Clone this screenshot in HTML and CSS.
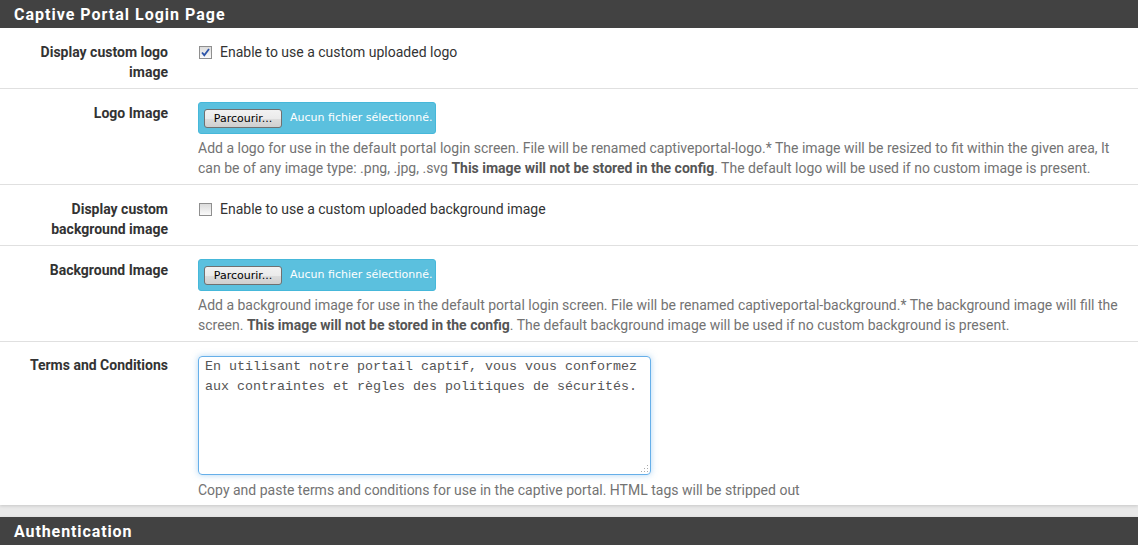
FILE: index.html
```html
<!DOCTYPE html>
<html lang="fr">
<head>
<meta charset="utf-8">
<title>Captive Portal Login Page</title>
<link rel="stylesheet" href="styles.css">
</head>
<body>
<div class="panel">
  <div class="panel-heading"><h2 class="panel-title">Captive Portal Login Page</h2></div>
  <div class="panel-body">
    <div class="form-group">
      <div class="label-col">Display custom logo image</div>
      <div class="field-col">
        <label class="chk">
          <span class="box checked"><svg viewBox="0 0 13 13" width="13" height="13"><path d="M3 6.5 L5.3 9.2 L10 3" fill="none" stroke="#2d54a8" stroke-width="1.8"/></svg></span>
          Enable to use a custom uploaded logo
        </label>
      </div>
    </div>
    <div class="form-group">
      <div class="label-col">Logo Image</div>
      <div class="field-col">
        <div class="file-input"><span class="browse">Parcourir...</span><span class="file-name">Aucun fichier sélectionné.</span></div>
        <p class="help">Add a logo for use in the default portal login screen. File will be renamed captiveportal-logo.* The image will be resized to fit within the given area, It can be of any image type: .png, .jpg, .svg <b>This image will not be stored in the config</b>. The default logo will be used if no custom image is present.</p>
      </div>
    </div>
    <div class="form-group">
      <div class="label-col">Display custom background image</div>
      <div class="field-col">
        <label class="chk">
          <span class="box"></span>
          Enable to use a custom uploaded background image
        </label>
      </div>
    </div>
    <div class="form-group">
      <div class="label-col">Background Image</div>
      <div class="field-col">
        <div class="file-input"><span class="browse">Parcourir...</span><span class="file-name">Aucun fichier sélectionné.</span></div>
        <p class="help">Add a background image for use in the default portal login screen. File will be renamed captiveportal-background.* The background image will fill the screen. <b>This image will not be stored in the config</b>. The default background image will be used if no custom background is present.</p>
      </div>
    </div>
    <div class="form-group last">
      <div class="label-col">Terms and Conditions</div>
      <div class="field-col">
        <div class="textarea">En utilisant notre portail captif, vous vous conformez<br>aux contraintes et règles des politiques de sécurités.<span class="grip"></span></div>
        <p class="help">Copy and paste terms and conditions for use in the captive portal. HTML tags will be stripped out</p>
      </div>
    </div>
  </div>
</div>
<div class="panel">
  <div class="panel-heading"><h2 class="panel-title cond">Authentication</h2></div>
</div>
</body>
</html>
```
FILE: styles.css
```css
* { box-sizing: border-box; }
html, body { margin: 0; padding: 0; }
body {
  background: #e9e9e9;
  font-family: Roboto, "Liberation Sans", sans-serif;
  font-size: 14px;
  color: #333;
  width: 1138px;
  height: 545px;
  overflow: hidden;
}
.panel {
  background: #fff;
  margin-bottom: 12px;
  box-shadow: 0 1px 3px rgba(0,0,0,0.15);
}
.panel-heading {
  background: #424242;
  height: 28px;
  padding: 0 14px;
  display: flex;
  align-items: center;
}
.panel-title {
  margin: 0;
  color: #fff;
  font-family: Roboto, "Liberation Sans", sans-serif;
  font-weight: 700;
  font-size: 16px;
  letter-spacing: 1px;
}
.panel-title.cond {
  font-size: 16px;
  letter-spacing: 0.9px;
}
.form-group {
  display: flex;
  border-bottom: 1px solid #e0e0e0;
  padding: 14px 0 6px;
  line-height: 20px;
}
.form-group.last { border-bottom: none; padding-top: 13px; padding-bottom: 5px; }
.label-col {
  width: 183px;
  flex: none;
  padding: 0 15px 0 20px;
  text-align: right;
  font-weight: 700;
  font-family: Roboto, sans-serif;
  font-size: 14px;
}
.field-col {
  flex: 1;
  padding: 0 15px;
  min-height: 40px;
}
.chk {
  display: flex;
  align-items: center;
  gap: 8px;
  height: 20px;
  padding-left: 1px;
}
.box {
  width: 13px;
  height: 13px;
  border: 1px solid #8f8f8f;
  background: linear-gradient(#dcdcdc, #fafafa);
  display: inline-block;
  position: relative;
  flex: none;
}
.box svg { position: absolute; left: -1px; top: -1px; }
.file-input {
  width: 238px;
  height: 32px;
  background: #5bc0de;
  border: 1px solid #46b8da;
  border-radius: 3px;
  display: flex;
  align-items: center;
  padding-left: 5px;
  margin-top: -1px;
}
.browse {
  display: inline-block;
  width: 78px;
  height: 19px;
  border: 1px solid #707070;
  border-radius: 3px;
  background: linear-gradient(#f2f2f2, #ebebeb 50%, #dddddd 51%, #cfcfcf);
  font-family: "DejaVu Sans", "Liberation Sans", sans-serif;
  font-size: 11px;
  line-height: 17px;
  text-align: center;
  color: #000;
}
.file-name {
  color: #fff;
  font-family: "DejaVu Sans", "Liberation Sans", sans-serif;
  font-size: 11px;
  margin-left: 8px;
}
.help {
  margin: 4px 0 0;
  color: #737373;
  font-family: "Liberation Sans Narrow", Roboto, sans-serif;
  font-size: 14px;
  line-height: 20px;
}
.help b { color: #555; }
.textarea {
  width: 453px;
  height: 119px;
  border: 1px solid #66afe9;
  border-radius: 4px;
  box-shadow: 0 0 6px rgba(102,175,233,0.5);
  padding: 0 6px;
  font-family: "Liberation Mono", monospace;
  font-size: 13.33px;
  line-height: 20px;
  color: #555;
  position: relative;
  margin-top: 1px;
  margin-bottom: 5px;
}
.grip {
  position: absolute;
  right: 2px;
  bottom: 2px;
  width: 8px;
  height: 8px;
  background:
    radial-gradient(circle, #aaa 0.8px, transparent 1px) 0 0 / 3px 3px;
  clip-path: polygon(100% 0, 100% 100%, 0 100%);
}
```
